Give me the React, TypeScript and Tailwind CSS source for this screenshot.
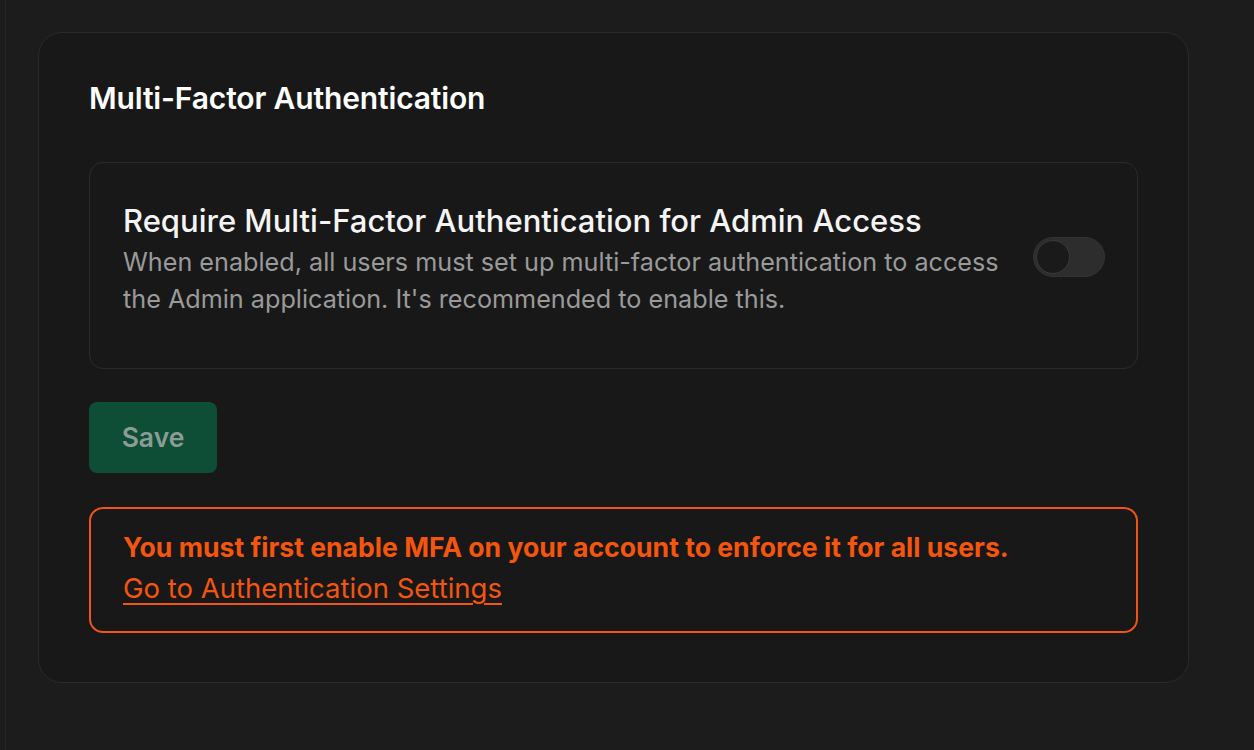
import { useState } from 'react';

export default function App() {
  const [enabled, setEnabled] = useState(false);

  return (
    <div className="flex h-screen w-full bg-[#1c1c1c] font-['Inter','Noto_Sans',sans-serif] antialiased">
      {/* left rail edge */}
      <div className="w-[6px] shrink-0 border-r border-[#252525]" />

      <main className="flex-1 pl-[32px] pt-[32px]">
        <section className="w-[1151px] rounded-[24px] border border-[#2a2a2a] bg-[#181818] px-[50px] pt-[47px] pb-[49px]">
          <h2 className="text-[30px] font-semibold leading-[36px] tracking-[-0.15px] text-white">
            Multi-Factor Authentication
          </h2>

          {/* setting row */}
          <div className="mt-[46px] flex items-center gap-[24px] rounded-[14px] border border-[#2b2b2b] bg-[#181818] pl-[33px] pr-[32px] pt-[39px] pb-[50px]">
            <div className="flex-1">
              <p className="text-[31px] font-medium leading-[38px] text-[#f4f4f4]">
                Require Multi-Factor Authentication for Admin Access
              </p>
              <p className="mt-[4px] text-[25.2px] leading-[37px] text-[#9a9a9a]">
                When enabled, all users must set up multi-factor authentication to access the Admin application. It's recommended to enable this.
              </p>
            </div>
            <button
              onClick={() => setEnabled(!enabled)}
              className={`relative mb-[6px] h-[40px] w-[72px] shrink-0 rounded-full border border-[#333] ${enabled ? 'bg-[#0e6b47]' : 'bg-[#2d2d2d]'}`}
            >
              <span
                className={`absolute top-[2px] h-[34px] w-[34px] rounded-full border border-[#3a3a3a] bg-[#1a1a1a] ${enabled ? 'left-[34px]' : 'left-[2px]'}`}
              />
            </button>
          </div>

          <button className="mt-[33px] h-[71px] w-[128px] rounded-[8px] bg-[#0e4d36] text-[26.5px] font-semibold text-[#8a9c93]">
            Save
          </button>

          {/* warning */}
          <div className="mt-[34px] rounded-[14px] border-2 border-[#f0560f] pl-[32px] pt-[19px] pb-[23px]">
            <p className="text-[26.6px] font-bold leading-[38px] text-[#f4560e]">
              You must first enable MFA on your account to enforce it for all users.
            </p>
            <a href="#" className="mt-[2px] block w-fit text-[27.5px] leading-[40px] text-[#f4560e] underline decoration-[2px] underline-offset-[5px]">
              Go to Authentication Settings
            </a>
          </div>
        </section>
      </main>
    </div>
  );
}
